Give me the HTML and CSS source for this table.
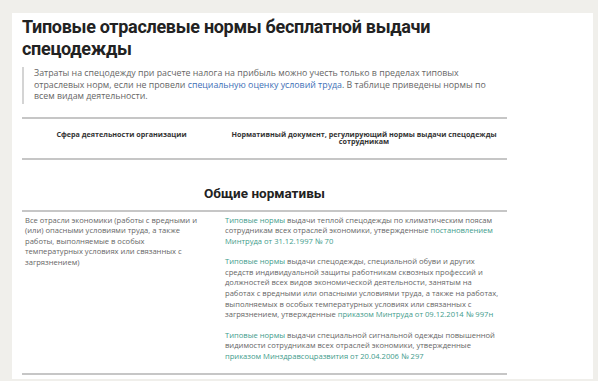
FILE: index.html
```html
<!DOCTYPE html>
<html lang="ru">
<head>
<meta charset="utf-8">
<link rel="stylesheet" href="styles.css">
</head>
<body>
<div class="card">
  <div class="content">
    <h1 class="title">Типовые отраслевые нормы бесплатной выдачи спецодежды</h1>
    <p class="lead">Затраты на спецодежду при расчете налога на прибыль можно учесть только в пределах типовых отраслевых норм, если не провели <a class="blue" href="#">специальную оценку условий труда</a>. В таблице приведены нормы по всем видам деятельности.</p>
    <table class="norms">
      <colgroup>
        <col class="w1">
        <col class="w2">
      </colgroup>
      <thead>
        <tr>
          <th class="c1">Сфера деятельности организации</th>
          <th class="c2">Нормативный документ, регулирующий нормы выдачи спецодежды сотрудникам</th>
        </tr>
      </thead>
      <tbody>
        <tr class="section">
          <td colspan="2">Общие нормативы</td>
        </tr>
        <tr class="row">
          <td class="c1">Все отрасли экономики (работы с вредными и (или) опасными условиями труда, а также работы, выполняемые в особых температурных&nbsp;условиях или связанных с загрязнением)</td>
          <td class="c2">
            <p><a class="green" href="#">Типовые нормы</a> выдачи теплой спецодежды по климатическим поясам сотрудникам всех отраслей экономики, утвержденные <a class="green" href="#">постановлением Минтруда от 31.12.1997 № 70</a></p>
            <p><a class="green" href="#">Типовые нормы</a> выдачи спецодежды, специальной обуви и других средств индивидуальной защиты работникам сквозных профессий и должностей всех видов экономической деятельности, занятым на работах&nbsp;с&nbsp;вредными или опасными условиями труда, а также на работах, выполняемых в особых температурных условиях или связанных с загрязнением, утвержденные <a class="green" href="#">приказом Минтруда от 09.12.2014 № 997н</a></p>
            <p><a class="green" href="#">Типовые нормы</a> выдачи специальной сигнальной одежды повышенной видимости сотрудникам всех отраслей экономики, утвержденные <a class="green" href="#">приказом Минздравсоцразвития от 20.04.2006 № 297</a></p>
          </td>
        </tr>
      </tbody>
    </table>
  </div>
</div>
</body>
</html>
```

FILE: styles.css
```css
html, body {
  margin: 0;
  padding: 0;
}
body {
  background: #f0efeb;
  padding: 13px 5px 2px 12px;
  font-family: "Open Sans", "Liberation Sans", sans-serif;
}
.card {
  background: #fff;
  height: 366px;
  padding: 3px 10px 0 10px;
  box-sizing: border-box;
}
.content {
  width: 485px;
}
.title {
  margin: 0;
  font-family: Roboto, "Open Sans", sans-serif;
  font-size: 18px;
  letter-spacing: -0.3px;
  line-height: 22px;
  font-weight: 700;
  color: #222;
}
.lead {
  margin: 7px 0 0 0;
  border-left: 2px solid #d4d4d4;
  padding: 1px 0 1px 10px;
  font-size: 8.8px;
  line-height: 11.5px;
  color: #666;
}
a {
  text-decoration: none;
}
.blue {
  color: #3d6fb6;
}
.green {
  color: #3f9c8c;
}
.norms {
  margin-top: 13px;
  width: 485px;
  border-collapse: collapse;
  table-layout: fixed;
}
.w1 {
  width: 199px;
}
.w2 {
  width: 286px;
}
.norms thead th {
  border-top: 2px solid #c6c6c6;
  border-bottom: 2px solid #c6c6c6;
  font-size: 7.2px;
  line-height: 7.5px;
  font-weight: 700;
  color: #333;
  text-align: center;
  vertical-align: top;
  padding: 12px 2px 12px 2px;
}
.section td {
  text-align: center;
  font-family: Roboto, "Open Sans", sans-serif;
  font-size: 13.5px;
  line-height: 16px;
  font-weight: 700;
  color: #222;
  padding: 25px 0 9px 0;
  border-bottom: 2px solid #c6c6c6;
}
.row td {
  vertical-align: top;
  font-size: 7.6px;
  line-height: 10.6px;
  color: #666;
  padding: 3px 2px 11px 4px;
  border-bottom: 2px solid #c6c6c6;
}
.row td.c1 {
  padding-left: 3px;
  padding-right: 14px;
}
.row td.c2 p {
  margin: 0 0 10px 0;
}
.row td.c2 p:last-child {
  margin-bottom: 0;
}
```
